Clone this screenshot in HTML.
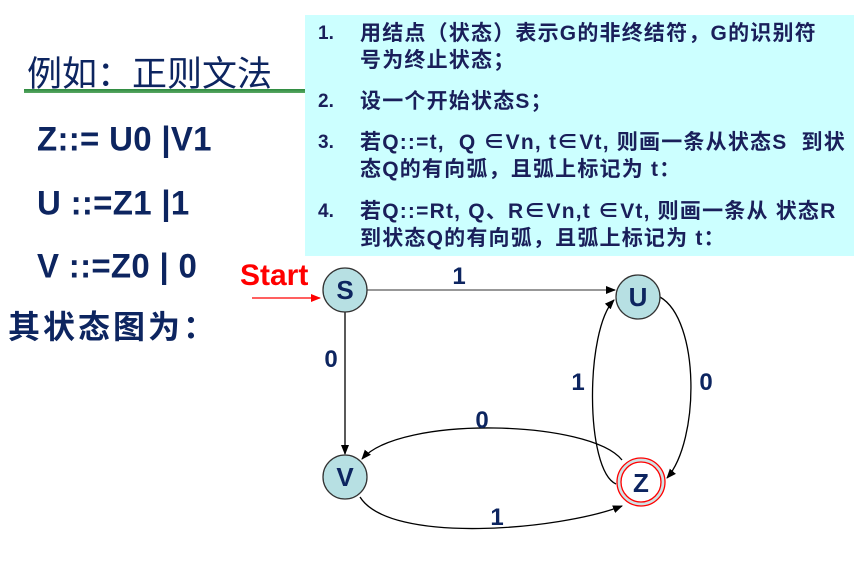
<!DOCTYPE html>
<html><head><meta charset="utf-8"><style>
body{margin:0;width:856px;height:571px;background:#fff;position:relative;overflow:hidden;font-family:"Liberation Sans","Noto Sans CJK SC",sans-serif}
.a{position:absolute;white-space:nowrap}
.box{position:absolute;left:305px;top:15px;width:549px;height:241px;background:#ccffff}
.li{position:absolute;font-weight:bold;font-size:21px;color:#1a1f5a;line-height:27px;white-space:nowrap;letter-spacing:1.2px}
.n{font-size:19px;letter-spacing:0}
.g{position:absolute;font-weight:bold;font-size:33px;color:#0d2560;transform:scaleY(1.05);transform-origin:left top;white-space:nowrap;letter-spacing:0.3px}
</style></head><body>
<div class="box"></div>
<div class="li n" style="left:318px;top:20px">1.</div>
<div class="li" style="left:360px;top:20px">用结点（状态）表示G的非终结符，G的识别符<br>号为终止状态；</div>
<div class="li n" style="left:318px;top:88px">2.</div>
<div class="li" style="left:360px;top:88px">设一个开始状态S；</div>
<div class="li n" style="left:318px;top:129px">3.</div>
<div class="li" style="left:360px;top:129px">若Q::=t,&nbsp; Q ∈Vn, t∈Vt, 则画一条从状态S&nbsp; 到状<br>态Q的有向弧，且弧上标记为 t：</div>
<div class="li n" style="left:318px;top:198px">4.</div>
<div class="li" style="left:360px;top:198px">若Q::=Rt, Q、R∈Vn,t ∈Vt, 则画一条从 状态R<br>到状态Q的有向弧，且弧上标记为 t：</div>

<div style="position:absolute;left:24px;top:89px;width:281px;height:4px;background:linear-gradient(#2e8b3e,#5aa864)"></div>
<div class="a" style="left:27px;top:55px;font-size:35px;color:#0d2560;line-height:40px">例如：正则文法</div>
<div class="g" style="left:37px;top:120px;line-height:36px">Z::= U0 |V1</div>
<div class="g" style="left:37px;top:184px;line-height:36px">U ::=Z1 |1</div>
<div class="g" style="left:37px;top:247px;line-height:36px">V ::=Z0 | 0</div>
<div class="a" style="left:8px;top:308px;font-size:32px;color:#0d2560;font-weight:bold;line-height:38px;letter-spacing:3px">其状态图为：</div>
<div class="a" style="left:240px;top:258px;font-size:30px;color:#f00;font-weight:bold;line-height:36px">Start</div>

<svg width="856" height="571" style="position:absolute;left:0;top:0" viewBox="0 0 856 571">
<defs><marker id="ar" markerWidth="10" markerHeight="8" refX="9" refY="4" orient="auto" markerUnits="userSpaceOnUse"><path d="M0,0 L10,4 L0,8 z" fill="#000"/></marker>
<marker id="rr" markerWidth="10" markerHeight="8" refX="9" refY="4" orient="auto" markerUnits="userSpaceOnUse"><path d="M0,0 L10,4 L0,8 z" fill="#f00"/></marker></defs>
<g fill="none" stroke-width="1.3">
<line x1="252" y1="298" x2="320" y2="298" stroke="#f00" marker-end="url(#rr)"/>
<line x1="367" y1="290" x2="615" y2="290" stroke="#777" stroke-width="1.5" marker-end="url(#ar)"/>
<line x1="345" y1="312" x2="345" y2="454" stroke="#000" marker-end="url(#ar)"/>
<path d="M660,297 C700,320 700,440 667,478" stroke="#000" marker-end="url(#ar)"/>
<path d="M616,484 C585,470 585,330 614,300" stroke="#000" marker-end="url(#ar)"/>
<path d="M622,460 C590,420 400,415 362,459" stroke="#000" marker-end="url(#ar)"/>
<path d="M360,497 C390,545 560,530 622,506" stroke="#000" marker-end="url(#ar)"/>
</g>
<circle cx="345" cy="290" r="22" fill="#b7e0e3" stroke="#333" stroke-width="1.3"/>
<circle cx="638" cy="297" r="22" fill="#b7e0e3" stroke="#333" stroke-width="1.3"/>
<circle cx="345" cy="477" r="22" fill="#b7e0e3" stroke="#333" stroke-width="1.3"/>
<circle cx="641" cy="482" r="24" fill="#cfe3e5" stroke="#f00" stroke-width="1.3"/>
<circle cx="641" cy="482" r="20" fill="#fff" stroke="#f00" stroke-width="1.3"/>
<g font-family="Liberation Sans" font-weight="bold" fill="#0d2560" text-anchor="middle" font-size="26">
<text x="345" y="299">S</text><text x="638" y="306">U</text><text x="345" y="486">V</text><text x="641" y="492">Z</text>
</g>
<g font-family="Liberation Sans" font-weight="bold" fill="#0d2560" text-anchor="middle" font-size="24">
<text x="459" y="284">1</text><text x="331" y="367">0</text><text x="578" y="390">1</text><text x="706" y="390">0</text><text x="482" y="428">0</text><text x="497" y="525">1</text>
</g>
</svg>
</body></html>
